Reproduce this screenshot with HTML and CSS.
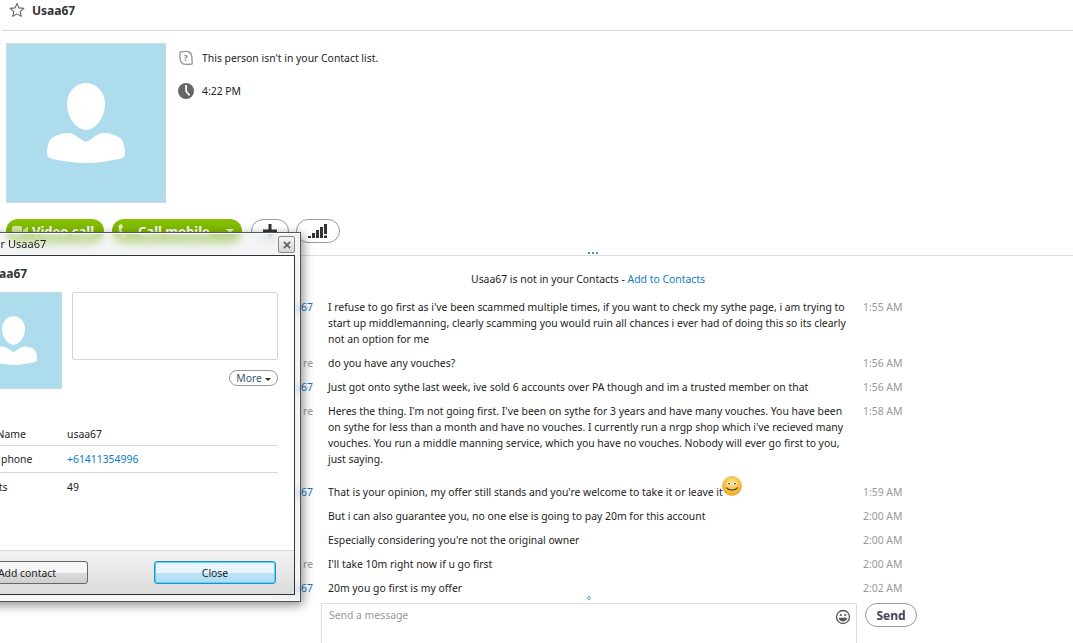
FILE: index.html
```html
<!DOCTYPE html>
<html lang="en">
<head>
    <meta charset="UTF-8">
    <meta name="viewport" content="width=device-width, initial-scale=1.0">
    <title>Usaa67</title>
    <link rel="stylesheet" href="styles.css">
</head>
<body>
    <div class="page">
        <div class="header">
            <svg class="star" width="16" height="16" viewBox="0 0 16 16"><path d="M8 1.500l2 4.400 4.800.5-3.600 3.200 1 4.800L8 11.900l-4.200 2.500 1-4.800L1.200 6.400 6 5.900z" fill="#fff" stroke="#666" stroke-width="1.100" stroke-linejoin="round"/></svg>
            <span class="header-name">Usaa67</span>
        </div>

        <div class="profile">
            <svg class="avatar" width="160" height="160" viewBox="0 0 160 160"><rect x=".5" y=".5" width="159" height="159" fill="#addcec" stroke="#cfd8dc"/><path d="M80 40C91 40 99 50 99 61 99 75 89 87 80 87 71 87 61 75 61 61 61 50 69 40 80 40Z" fill="#fff"/><path d="M41 110C41 104 43 97 46 95 50 92 56 90 62 90 69 90 74 97 80 99 86 97 91 90 98 90 104 90 110 92 114 95 117 97 119 104 119 110 119 115 115 116 108 117 98 119 90 120 80 120 70 120 62 119 52 117 45 116 41 115 41 110Z" fill="#fff"/></svg>
            <div class="profile-info">
                <div class="info-line">
                    <svg width="16" height="16" viewBox="0 0 16 16"><path d="M2.500 2C5 1.500 10 1.500 11 2 13 3 14 6 14 9 14 11 14.500 13.500 14 14 12 14.500 8 14.500 5.500 14 3 13 2 10 2 7 2 5 1.800 3 2.500 2Z" fill="#fff" stroke="#999" stroke-width="1.400"/><text x="5.500" y="11" class="info-q">?</text></svg>
                    <span>This person isn't in your Contact list.</span>
                </div>
                <div class="info-line info-time">
                    <svg width="16" height="16" viewBox="0 0 16 16"><circle cx="8" cy="8" r="8" fill="#666"/><path d="M7.200 2H9v6l3.200 4-1.200 1-3.800-4.500z" fill="#fff"/></svg>
                    <span>4:22 PM</span>
                </div>
            </div>
        </div>

        <div class="actions">
            <button class="call-btn call-video">
                <svg width="16" height="12" viewBox="0 0 16 12"><rect y="1" width="10" height="10" rx="2" fill="#d6e9a6"/><path d="M11 5l5-3.500v9L11 7z" fill="#d6e9a6"/></svg>
                Video call
            </button>
            <button class="call-btn call-mobile">
                <svg width="8" height="14" viewBox="0 0 8 14"><path d="M1 1l3-1 1 4-2 1 1.500 4 2-.5L8 12l-3 1.500C2 11 0 5 1 1z" fill="#e4f0c4"/></svg>
                Call mobile
                <span class="caret"></span>
            </button>
            <button class="round-btn round-plus">
                <svg width="14" height="14" viewBox="0 0 14 14"><path d="M7 0v14M0 7h14" stroke="#333" stroke-width="3"/></svg>
            </button>
            <button class="round-btn round-signal">
                <svg width="20" height="14" viewBox="0 0 20 14"><path d="M0 12h3v2H0zM4 9h3v5H4zM8 6h3v8H8zM12 3h3v11h-3zM16 0h3v10h-3zM16 11.500h3V14h-3z" fill="#333"/></svg>
            </button>
        </div>

        <div class="chat-divider">
            <div class="dots"><span></span><span></span><span></span></div>
        </div>

        <div class="notice">Usaa67 is not in your Contacts - <a href="#">Add to Contacts</a></div>

        <div class="messages">
            <div class="msg">
                <span class="msg-name">Usaa67</span>
                <p class="msg-text">I refuse to go first as i've been scammed multiple times, if you want to check my sythe page, i am trying to start up middlemanning, clearly scamming you would ruin all chances i ever had of doing this so its clearly not an option for me</p>
                <span class="msg-time">1:55 AM</span>
            </div>
            <div class="msg">
                <span class="msg-name me">re</span>
                <p class="msg-text">do you have any vouches?</p>
                <span class="msg-time">1:56 AM</span>
            </div>
            <div class="msg">
                <span class="msg-name">Usaa67</span>
                <p class="msg-text">Just got onto sythe last week, ive sold 6 accounts over PA though and im a trusted member on that</p>
                <span class="msg-time">1:56 AM</span>
            </div>
            <div class="msg">
                <span class="msg-name me">re</span>
                <p class="msg-text">Heres the thing. I'm not going first. I've been on sythe for 3 years and have many vouches. You have been on sythe for less than a month and have no vouches. I currently run a nrgp shop which i've recieved many vouches. You run a middle manning service, which you have no vouches. Nobody will ever go first to you, just saying.</p>
                <span class="msg-time">1:58 AM</span>
            </div>
            <div class="msg msg-emoji">
                <span class="msg-name">Usaa67</span>
                <p class="msg-text">That is your opinion, my offer still stands and you're welcome to take it or leave it
                    <svg class="emoji" width="20" height="20" viewBox="0 0 21 21">
                        <defs><radialGradient id="face" cx="50%" cy="35%" r="65%"><stop offset="0" stop-color="#ffe680"/><stop offset="1" stop-color="#f2a91c"/></radialGradient></defs>
                        <circle cx="10.500" cy="10.500" r="10" fill="url(#face)" stroke="#e0a030" stroke-width=".6"/>
                        <ellipse cx="7.500" cy="8" rx="2" ry="1.600" fill="#fff"/><ellipse cx="13.500" cy="8" rx="2" ry="1.600" fill="#fff"/>
                        <circle cx="7.500" cy="8" r="1" fill="#333"/><circle cx="13.500" cy="8" r="1" fill="#333"/>
                        <path d="M5 12.500c2 3 9 3 11 0" fill="none" stroke="#333" stroke-width="1.100" stroke-linecap="round"/>
                    </svg>
                </p>
                <span class="msg-time">1:59 AM</span>
            </div>
            <div class="msg">
                <span class="msg-name"></span>
                <p class="msg-text">But i can also guarantee you, no one else is going to pay 20m for this account</p>
                <span class="msg-time">2:00 AM</span>
            </div>
            <div class="msg">
                <span class="msg-name"></span>
                <p class="msg-text">Especially considering you're not the original owner</p>
                <span class="msg-time">2:00 AM</span>
            </div>
            <div class="msg">
                <span class="msg-name me">re</span>
                <p class="msg-text">I'll take 10m right now if u go first</p>
                <span class="msg-time">2:00 AM</span>
            </div>
            <div class="msg">
                <span class="msg-name">Usaa67</span>
                <p class="msg-text">20m you go first is my offer</p>
                <span class="msg-time">2:02 AM</span>
            </div>
        </div>

        <div class="composer">
            <div class="composer-box">
                <span class="placeholder">Send a message</span>
                <svg class="composer-smile" width="16" height="16" viewBox="0 0 16 16"><circle cx="8" cy="8" r="6.500" fill="#fff" stroke="#555" stroke-width="1.300"/><circle cx="5.800" cy="6" r="1.100" fill="#555"/><circle cx="10.200" cy="6" r="1.100" fill="#555"/><path d="M3.800 8.800h8.400c-.4 5-8 5-8.400 0z" fill="#555"/></svg>
            </div>
            <button class="send-btn">Send</button>
        </div>
        <span class="resize-dot"></span>
    </div>

    <div class="dialog">
        <div class="dialog-title">
            <span>Profile for Usaa67</span>
            <span class="dialog-x">
                <svg width="8" height="8" viewBox="0 0 9 9"><path d="M1 1l7 7M8 1L1 8" stroke="#667" stroke-width="2.200"/></svg>
            </span>
        </div>
        <div class="dialog-body">
            <div class="dialog-content">
                <div class="dialog-heading">Usaa67</div>
                <div class="dialog-top">
                    <svg class="dialog-avatar" width="97" height="97" viewBox="0 0 160 160"><rect x=".8" y=".8" width="158.400" height="158.400" fill="#addcec" stroke="#c4d8e0" stroke-width="1.600"/><path d="M80 40C91 40 99 50 99 61 99 75 89 87 80 87 71 87 61 75 61 61 61 50 69 40 80 40Z" fill="#fff"/><path d="M41 110C41 104 43 97 46 95 50 92 56 90 62 90 69 90 74 97 80 99 86 97 91 90 98 90 104 90 110 92 114 95 117 97 119 104 119 110 119 115 115 116 108 117 98 119 90 120 80 120 70 120 62 119 52 117 45 116 41 115 41 110Z" fill="#fff"/></svg>
                    <div class="dialog-side">
                        <div class="mood-box"></div>
                        <button class="more-btn">More <span class="more-caret"></span></button>
                    </div>
                </div>
                <div class="detail detail-first">
                    <span>Skype Name</span><span>usaa67</span>
                </div>
                <div class="detail">
                    <span>Mobile phone</span><a href="#">+61411354996</a>
                </div>
                <div class="detail">
                    <span>Contacts</span><span>49</span>
                </div>
            </div>
            <div class="dialog-footer">
                <button class="win-btn">Add contact</button>
                <button class="win-btn win-primary">Close</button>
            </div>
        </div>
    </div>
</body>
</html>
```

FILE: styles.css
```css
html, body {
    margin: 0;
    padding: 0;
    height: 100%;
    overflow: hidden;
    background: #fff;
}

body {
    font-family: "Noto Sans", sans-serif;
    font-size: 10.400px;
    color: #222;
}

button {
    font-family: inherit;
    cursor: pointer;
}

a {
    color: #0a7cc8;
    text-decoration: none;
}

.page {
    height: 643px;
    display: flex;
    flex-direction: column;
    position: relative;
}

.header {
    height: 30px;
    margin-left: 2px;
    padding-left: 7px;
    border-bottom: 1px solid #d8d8d8;
    display: flex;
    align-items: flex-start;
}

.star {
    margin-top: 2px;
}

.header-name {
    margin-left: 7px;
    margin-top: 2px;
    font-size: 12px;
    font-weight: 700;
    color: #333;
}

.profile {
    display: flex;
    padding: 12px 0 0 6px;
    height: 164px;
}

.avatar {
    flex: none;
    display: block;
}

.profile-info {
    margin-left: 12px;
    padding-top: 7px;
}

.info-line {
    display: flex;
    align-items: center;
    gap: 8px;
    height: 16px;
}

.info-time {
    margin-top: 17px;
}

.info-q {
    font-size: 9px;
    font-weight: 700;
    fill: #888;
}

.actions {
    display: flex;
    align-items: center;
    padding-left: 6px;
    height: 24px;
    margin-top: 12px;
}

.call-btn {
    height: 24px;
    border: none;
    border-radius: 12px;
    background: linear-gradient(#86c000, #78b000);
    color: #fff;
    font-size: 13px;
    font-weight: 700;
    display: flex;
    align-items: center;
    gap: 4px;
    padding: 0 0 0 6px;
}

.call-video {
    width: 98px;
    margin-right: 8px;
}

.call-mobile {
    width: 130px;
    margin-right: 9px;
    gap: 12px;
}

.caret {
    margin-left: 4px;
    border: 4px solid transparent;
    border-top-color: #e4f0c4;
    border-bottom: none;
}

.round-btn {
    height: 24px;
    background: #fff;
    border: 1px solid #999;
    border-radius: 12px;
    padding: 0;
    display: flex;
    align-items: center;
    justify-content: center;
}

.round-plus {
    width: 38px;
    margin-right: 7px;
}

.round-signal {
    width: 44px;
}

.chat-divider {
    height: 0;
    margin-top: 12px;
    border-bottom: 1px solid #ddd;
    position: relative;
}

.dots {
    position: absolute;
    left: 588px;
    top: -3px;
    display: flex;
    gap: 2px;
}

.dots span {
    width: 2px;
    height: 2px;
    background: #5b8ab8;
}

.notice {
    margin-top: 15px;
    text-align: center;
    height: 16px;
    line-height: 16px;
    padding-left: 103px;
}

.messages {
    margin-top: 12px;
    flex: 1;
    min-height: 0;
    overflow: hidden;
}

.msg {
    display: flex;
    line-height: 16px;
    margin-bottom: 8px;
}

.msg-name {
    width: 313px;
    flex: none;
    text-align: right;
    color: #0a7cc8;
}

.msg-name.me {
    color: #999;
}

.msg-text {
    margin: 0 0 0 15px;
    width: 520px;
    flex: none;
}

.msg-time {
    margin-left: 15px;
    color: #999;
}

.msg-emoji {
    margin-top: 17px;
}

.emoji {
    position: absolute;
    margin-left: -1px;
    margin-top: -8px;
}

.composer {
    height: 40px;
    flex: none;
    display: flex;
    align-items: flex-start;
    padding-left: 321px;
}

.composer-box {
    width: 536px;
    height: 40px;
    box-sizing: border-box;
    border: 1px solid #ddd;
    border-bottom: none;
    display: flex;
    justify-content: space-between;
    padding: 4px 5px 0 7px;
}

.placeholder {
    color: #999;
}

.composer-smile {
    margin-top: 1px;
}

.send-btn {
    margin-left: 8px;
    width: 52px;
    height: 24px;
    background: #fff;
    border: 1px solid #999;
    border-radius: 12px;
    padding: 0;
    font-size: 12px;
    font-weight: 700;
    color: #445;
}

.resize-dot {
    position: absolute;
    left: 587px;
    top: 596px;
    width: 2px;
    height: 2px;
    border: 1px solid #6fa3c0;
    border-radius: 50%;
}

/* window floats over the chat, cut off by the left screen edge */
.dialog {
    position: absolute;
    left: -50px;
    top: 232px;
    width: 351px;
    height: 370px;
    box-sizing: border-box;
    padding: 0 5px 6px 0;
    border: 1px solid #555;
    background: rgba(235, 238, 240, .58);
    backdrop-filter: blur(4px);
    box-shadow: 2px 3px 10px rgba(0, 0, 0, .45), inset 0 1px 0 #fff;
    display: flex;
    flex-direction: column;
}

.dialog-title {
    height: 22px;
    flex: none;
    display: flex;
    justify-content: space-between;
    align-items: flex-start;
    padding: 3px 0 0 3px;
    box-sizing: border-box;
    font-size: 11px;
    color: #222;
}

.dialog-x {
    width: 15px;
    height: 15px;
    border: 1px solid #888;
    border-radius: 2px;
    background: linear-gradient(#f4f4f4, #d8d8d8);
    display: flex;
    align-items: center;
    justify-content: center;
}

.dialog-body {
    flex: 1;
    background: #fff;
    border: 1px solid #333;
    display: flex;
    flex-direction: column;
    min-height: 0;
}

.dialog-content {
    flex: 1;
    padding: 8px 16px 0 13px;
}

.dialog-heading {
    padding-left: 19px;
    margin-top: 1px;
    height: 27px;
    font-size: 12px;
    font-weight: 700;
    color: #333;
}

.dialog-top {
    display: flex;
    gap: 10px;
    height: 127px;
}

.dialog-avatar {
    flex: none;
    display: block;
}

.dialog-side {
    flex: 1;
    display: flex;
    flex-direction: column;
    align-items: flex-end;
}

.mood-box {
    width: 100%;
    height: 68px;
    box-sizing: border-box;
    border: 1px solid #d5d5d5;
    border-radius: 2px;
}

.more-btn {
    margin-top: 10px;
    width: 49px;
    height: 16px;
    background: #fff;
    border: 1px solid #999;
    border-radius: 8px;
    padding: 0;
    font-size: 10.400px;
    color: #3b5570;
    line-height: 14px;
}

.more-caret {
    display: inline-block;
    vertical-align: middle;
    border: 3.500px solid transparent;
    border-top-color: #333;
    border-bottom: none;
}

.detail {
    display: flex;
    height: 27px;
    align-items: center;
    border-bottom: 1px solid #d8d8d8;
    box-sizing: border-box;
}

.detail-first {
    padding-top: 3px;
}

.detail span:first-child {
    width: 102px;
    flex: none;
}

.detail:last-child {
    border-bottom: none;
}

.dialog-footer {
    height: 44px;
    flex: none;
    box-sizing: border-box;
    border-top: 1px solid #d8d8d8;
    background: linear-gradient(#f2f2f2, #dcdcdc);
    display: flex;
    justify-content: space-between;
    align-items: center;
    padding: 0 18px 0 14px;
}

.win-btn {
    width: 122px;
    height: 23px;
    border: 1px solid #666;
    border-radius: 3px;
    padding: 0;
    font-size: 10.400px;
    color: #222;
    background: linear-gradient(#f6f6f6 50%, #dcdcdc 50%, #cfcfcf);
}

.win-primary {
    border-color: #1e90cc;
    box-shadow: inset 0 0 0 1px #5fd0f8;
    background: linear-gradient(#e8f5fc 50%, #bfe3f7 50%, #b0dcf5);
}
```
